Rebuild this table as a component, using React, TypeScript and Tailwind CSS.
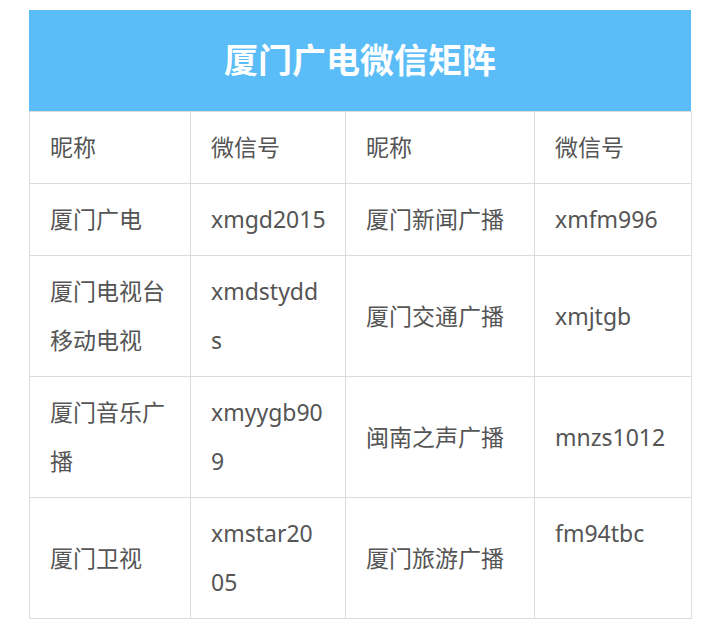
const font = { fontFamily: '"Noto Sans", "Noto Sans CJK SC", sans-serif' };

type Cell = { lines: string[]; top?: boolean };

const rows: Cell[][] = [
  [{ lines: ["昵称"] }, { lines: ["微信号"] }, { lines: ["昵称"] }, { lines: ["微信号"] }],
  [{ lines: ["厦门广电"] }, { lines: ["xmgd2015"] }, { lines: ["厦门新闻广播"] }, { lines: ["xmfm996"] }],
  [
    { lines: ["厦门电视台", "移动电视"] },
    { lines: ["xmdstydd", "s"] },
    { lines: ["厦门交通广播"] },
    { lines: ["xmjtgb"] },
  ],
  [
    { lines: ["厦门音乐广", "播"] },
    { lines: ["xmyygb90", "9"] },
    { lines: ["闽南之声广播"] },
    { lines: ["mnzs1012"] },
  ],
  [
    { lines: ["厦门卫视"] },
    { lines: ["xmstar20", "05"] },
    { lines: ["厦门旅游广播"] },
    { lines: ["fm94tbc"], top: true },
  ],
];

const widths = ["w-[161px]", "w-[155px]", "w-[189px]", "w-[157px]"];

export default function App() {
  return (
    <div className="w-[720px] h-[636px] bg-white pt-[10px] pl-[29px]" style={font}>
      <div className="w-[662px]">
        <div className="h-[101px] bg-[#5bbdf7] flex items-center justify-center">
          <h1 className="text-[34px] font-bold text-white tracking-[0px] leading-none -mt-[2px]">
            厦门广电微信矩阵
          </h1>
        </div>
        <table className="w-[662px] border-collapse table-fixed">
          <tbody>
            {rows.map((row, i) => (
              <tr key={i}>
                {row.map((cell, j) => (
                  <td
                    key={j}
                    className={`${widths[j]} border border-[#dcdcdc] pl-[20px] pr-[8px] py-[11px] text-[23px] leading-[49px] text-[#555555] whitespace-nowrap ${
                      cell.top ? "align-top" : "align-middle"
                    }`}
                  >
                    {cell.lines.map((l, k) => (
                      <div key={k}>{l}</div>
                    ))}
                  </td>
                ))}
              </tr>
            ))}
          </tbody>
        </table>
      </div>
    </div>
  );
}
